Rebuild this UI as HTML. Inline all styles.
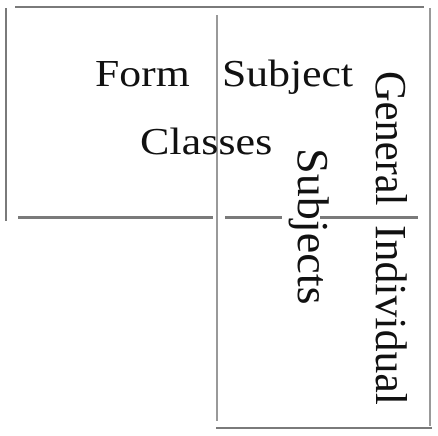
<!DOCTYPE html>
<html><head><style>
html,body{margin:0;padding:0;background:#fff;}
body{width:438px;height:436px;position:relative;overflow:hidden;font-family:"Liberation Serif",serif;color:#111;}
.l{position:absolute;background:#7a7a7a;}
.t{position:absolute;font-size:38px;line-height:38px;white-space:nowrap;transform-origin:0 0;}
.v{position:absolute;font-size:44px;line-height:44px;writing-mode:vertical-rl;white-space:nowrap;transform-origin:0 0;}
</style></head><body>
<div class="l" style="left:15px;top:6px;width:409px;height:2px"></div>
<div class="l" style="left:5px;top:8px;width:2px;height:213px"></div>
<div class="l" style="left:216px;top:15px;width:2px;height:406px;background:#999"></div>
<div class="l" style="left:429px;top:8px;width:2px;height:418px;background:#999"></div>
<div class="l" style="left:18px;top:216px;width:195px;height:3px"></div>
<div class="l" style="left:225px;top:216px;width:57px;height:3px"></div>
<div class="l" style="left:320px;top:216px;width:98px;height:3px"></div>
<div class="l" style="left:216px;top:427px;width:216px;height:2px"></div>

<div class="t" style="left:95px;top:55px;transform:scaleX(1.15)">Form</div>
<div class="t" style="left:222px;top:55px;transform:scaleX(1.15)">Subject</div>
<div class="t" style="left:140px;top:123px;transform:scaleX(1.16)">Classes</div>

<div class="v" style="left:368px;top:71px;transform:scaleY(0.965)">General</div>
<div class="v" style="left:368px;top:225px;transform:scaleY(0.995)">Individual</div>
<div class="v" style="left:290px;top:148px;transform:scaleY(1.05)">Subjects</div>
</body></html>
